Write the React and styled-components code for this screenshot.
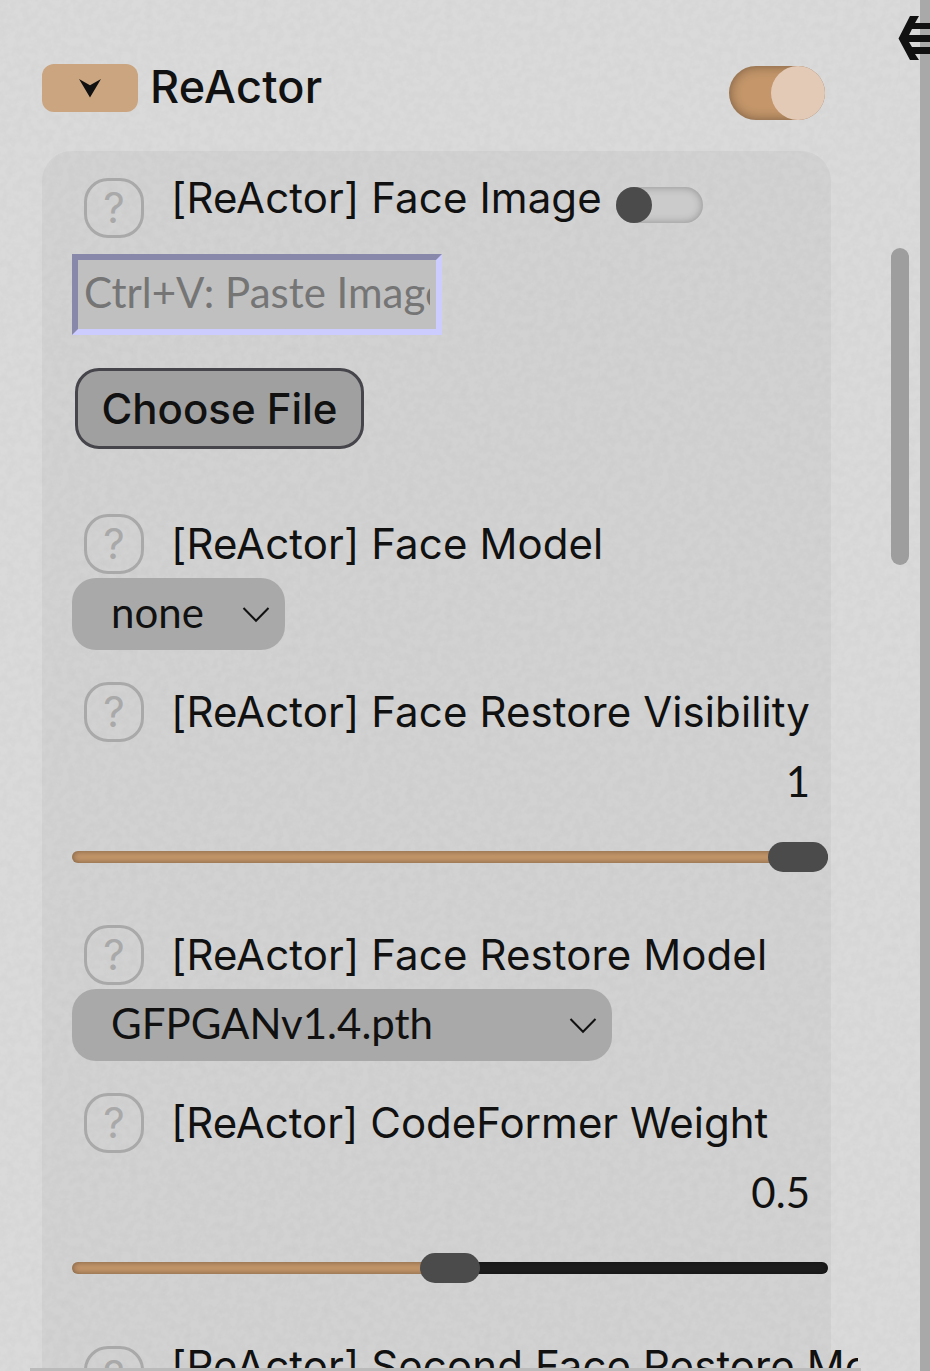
import { useState } from 'react'
import styled, { createGlobalStyle } from 'styled-components'

const grain =
  "url(\"data:image/svg+xml,%3Csvg xmlns='http://www.w3.org/2000/svg' width='300' height='300'%3E%3Cfilter id='n'%3E%3CfeTurbulence type='fractalNoise' baseFrequency='.13' numOctaves='3' stitchTiles='stitch'/%3E%3CfeColorMatrix values='0 0 0 0 0 0 0 0 0 0 0 0 0 0 0 .05 0 0 0 -.018'/%3E%3C/filter%3E%3Crect width='300' height='300' filter='url(%23n)'/%3E%3C/svg%3E\")"

const GlobalStyle = createGlobalStyle`
* {
  box-sizing: border-box;
}
body {
  margin: 0;
  overflow: hidden;
  background: #dadada;
  color: #111;
  font-family: Inter, sans-serif;
}
button, input {
  font: inherit;
  color: inherit;
}
`

const Page = styled.div`
position: relative;
display: flex;
width: 930px;
height: 1371px;
overflow: hidden;
background-color: #dadada;
background-image: ${grain};
`

const Scroller = styled.main`
width: 831px;
height: 1371px;
margin-left: 30px;
padding-right: 3px;
border-bottom: 3px solid #bbb;
`

const Content = styled.div`
height: 1368px;
overflow: hidden;
padding: 64px 0 0 12px;
`

const ScrollBar = styled.div`
width: 59px;
padding: 248px 0 0 30px;
`

const ScrollThumb = styled.div`
width: 18px;
height: 317px;
border-radius: 9px;
background: #9e9e9e;
`

const Gutter = styled.div`
width: 10px;
background: #a9a9a9;
`

const CollapseIcon = styled.svg`
position: absolute;
top: 15px;
right: 0;
`

const Header = styled.header`
display: flex;
align-items: flex-start;
width: 783px;
height: 87px;
`

const FoldButton = styled.button`
display: flex;
align-items: center;
justify-content: center;
width: 96px;
height: 48px;
padding: 0;
border: 0;
border-radius: 12px;
background: #caa580;
`

const Title = styled.h1`
flex: 1;
margin: -4px 0 0 12px;
font-size: 45px;
line-height: 54px;
font-weight: 500;
letter-spacing: 0.3px;
`

const Toggle = styled.button`
display: flex;
flex: none;
justify-content: ${(p) => (p.$on ? 'flex-end' : 'flex-start')};
width: ${(p) => p.$width}px;
height: ${(p) => p.$height}px;
margin: ${(p) => p.$margin};
padding: 0;
border: 0;
border-radius: 30px;
background: ${(p) => (p.$on ? '#c4966a' : '#cbcbcb')};
box-shadow: inset 0 0 ${(p) => (p.$on ? 12 : 9)}px rgba(0, 0, 0, ${(p) => (p.$on ? 0.4 : 0.3)});
`

const Knob = styled.span`
width: ${(p) => p.$size}px;
height: ${(p) => p.$size}px;
border-radius: 50%;
background: ${(p) => p.$color};
`

const Panel = styled.section`
width: 789px;
height: 1300px;
padding: 27px 0 0 30px;
border-radius: 30px;
background: rgba(0, 0, 0, 0.035);
`

const Row = styled.div`
display: flex;
align-items: flex-start;
height: ${(p) => p.$height}px;
padding-left: 12px;
`

const Help = styled.span`
display: flex;
flex: none;
align-items: center;
justify-content: center;
width: 60px;
height: 60px;
border: 3px solid #a9a9a9;
border-radius: 24px;
color: #a9a9a9;
font-size: 42px;
line-height: 54px;
`

const Label = styled.label`
margin: ${(p) => (p.$raised ? -6 : 4)}px 0 0 27px;
font-size: 42px;
line-height: 51px;
font-weight: 380;
letter-spacing: ${(p) => p.$spacing}px;
white-space: nowrap;
`

const PasteInput = styled.input`
display: block;
width: 370px;
height: 81px;
padding: 0 6px 5px;
border: 6px solid;
border-color: #8888aa #ccccff #ccccff #8888aa;
background: #c0c0c0;
font-family: Lato, sans-serif;
font-size: 42px;
outline: none;
&::placeholder {
  color: #757575;
  opacity: 1;
}
`

const FileButton = styled.button`
display: block;
width: 289px;
height: 81px;
margin: 33px 0 65px 3px;
padding: 0;
border: 3px solid #45454b;
border-radius: 24px;
background: #a0a0a0;
font-size: 42px;
font-weight: 500;
`

const Select = styled.div`
display: flex;
justify-content: space-between;
width: ${(p) => p.$width}px;
height: 72px;
margin-bottom: 32px;
padding: 0 15px 0 39px;
border-radius: 24px;
background: #a9a9a9;
font-family: Lato, sans-serif;
font-size: 42px;
line-height: 68px;
svg {
  margin-top: 28px;
}
`

const Value = styled.div`
width: 738px;
height: 86px;
font-family: Lato, sans-serif;
font-size: 42px;
line-height: 50px;
text-align: right;
`

const Slider = styled.div`
display: flex;
align-items: center;
width: 756px;
height: 30px;
margin-bottom: ${(p) => p.$gap}px;
`

const Track = styled.span`
flex: ${(p) => (p.$filled ? 'none' : 1)};
height: 12px;
border-radius: ${(p) => (p.$filled ? '6px 0 0 6px' : '0 6px 6px 0')};
background: ${(p) => (p.$filled ? '#c4966a' : '#1d1d1d')};
box-shadow: inset 0 0 6px rgba(0, 0, 0, 0.4);
`

const Thumb = styled.span`
flex: none;
width: 60px;
height: 30px;
margin: 0 -6px;
border-radius: 15px;
background: #4b4b4b;
z-index: 1;
`

const Chevron = () => (
  <svg width="28" height="18" viewBox="0 0 28 18" fill="none" stroke="#111" strokeWidth="2">
    <path d="M1.5 2 14 14.8 26.5 2" />
  </svg>
)

const Field = ({ label, height = 64, raised, spacing = 0.1, children }) => (
  <Row $height={height}>
    <Help>?</Help>
    <Label $raised={raised} $spacing={spacing}>{label}</Label>
    {children}
  </Row>
)

const Range = ({ value, gap }) => (
  <>
    <Value>{value}</Value>
    <Slider $gap={gap}>
      <Track $filled style={{ width: value * 696 + 6 }} />
      <Thumb />
      <Track />
    </Slider>
  </>
)

const App = () => {
  const [enabled, setEnabled] = useState(true)
  const [faceImage, setFaceImage] = useState(false)

  return (
    <Page>
      <GlobalStyle />
      <Scroller>
        <Content>
          <Header>
            <FoldButton>
              <svg width="24" height="20" viewBox="0 0 24 20">
                <path d="M1 1 12 7.2 23 1 12 19.5Z" fill="#111" />
              </svg>
            </FoldButton>
            <Title>ReActor</Title>
            <Toggle $on={enabled} $width={96} $height={54} $margin="2px 0 0" onClick={() => setEnabled(!enabled)}>
              <Knob $size={54} $color="#e3cab7" />
            </Toggle>
          </Header>
          <Panel>
            <Field label="[ReActor] Face Image" height={76} raised>
              <Toggle $on={faceImage} $width={87} $height={36} $margin="9px 0 0 14px" onClick={() => setFaceImage(!faceImage)}>
                <Knob $size={36} $color="#4b4b4b" />
              </Toggle>
            </Field>
            <PasteInput placeholder="Ctrl+V: Paste Image" />
            <FileButton>Choose File</FileButton>
            <Field label="[ReActor] Face Model" />
            <Select $width={213}>none<Chevron /></Select>
            <Field label="[ReActor] Face Restore Visibility" height={74} />
            <Range value={1} gap={53} />
            <Field label="[ReActor] Face Restore Model" />
            <Select $width={540}>GFPGANv1.4.pth<Chevron /></Select>
            <Field label="[ReActor] CodeFormer Weight" height={74} spacing={0} />
            <Range value={0.5} gap={63} />
            <Field label="[ReActor] Second Face Restore Model" raised />
          </Panel>
        </Content>
      </Scroller>
      <ScrollBar>
        <ScrollThumb />
      </ScrollBar>
      <Gutter />
      <CollapseIcon width="32" height="47" viewBox="0 0 32 47" fill="#111">
        <path d="M12 1h9l-4 7h15v6H14l-3 6h21v7H11l3 5h18v7H17l4 6h-9L0.5 23.5Z" />
      </CollapseIcon>
    </Page>
  )
}

export default App
